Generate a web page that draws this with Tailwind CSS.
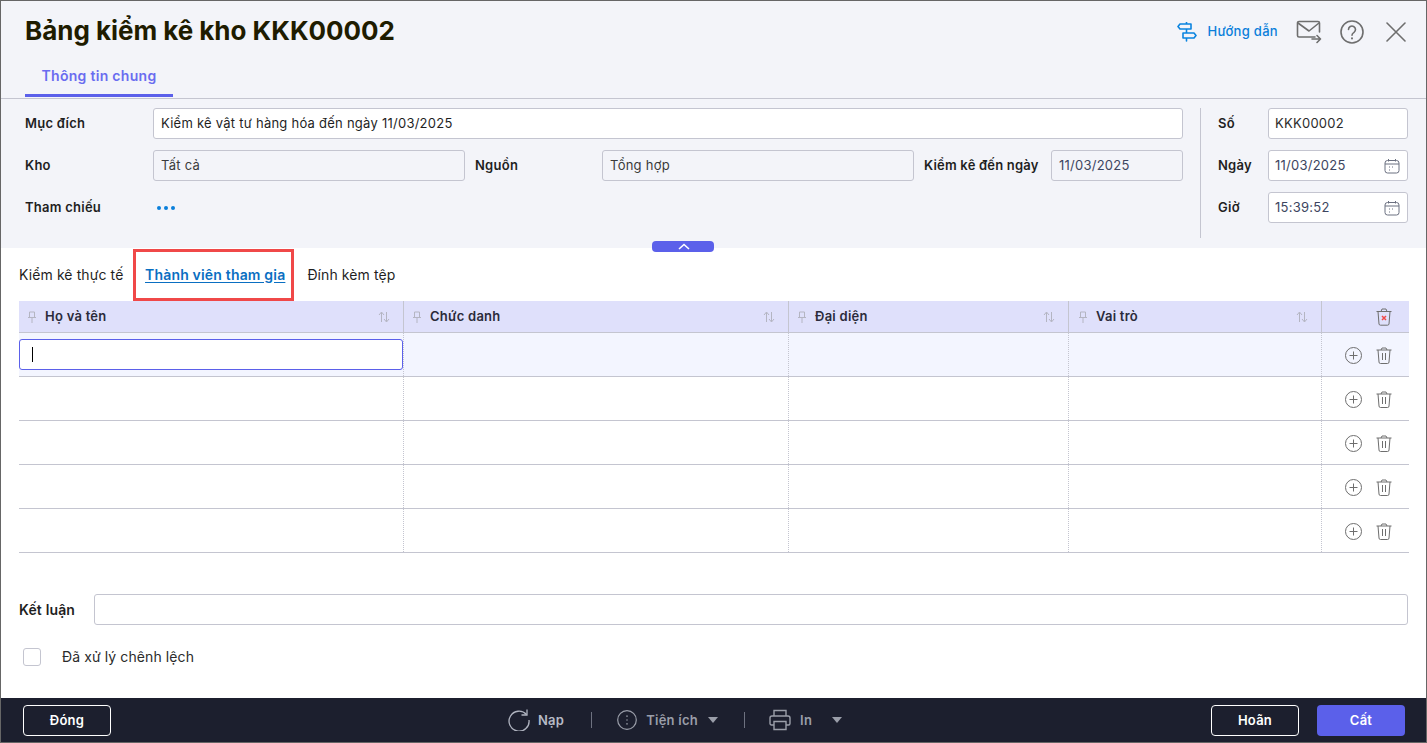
<!doctype html>
<html lang="vi"><head><meta charset="utf-8">
<script src="https://cdn.jsdelivr.net/npm/@tailwindcss/browser@4"></script>
</head>
<body class="m-0 bg-white">
<div class="w-[1427px] h-[743px] overflow-hidden flex flex-col border border-[#666666] font-['Inter',sans-serif] text-[13px] tracking-[0.25px] text-[#1f1f1f]">
  <!-- header -->
  <header class="h-[98px] shrink-0 bg-[#f3f4f9] border-b border-[#c4c5d0] flex justify-between relative">
    <div class="pl-[24px]">
      <h1 class="text-[26px] leading-[32px] font-bold tracking-[-0.03px] text-[#1f1c00] pt-[14px]">Bảng kiểm kê kho KKK00002</h1>
      <div class="mt-[12px] w-[148px] h-[38px] border-b-[3px] border-[#5b60ea] text-center text-[14px] leading-[33px] font-semibold tracking-[0.3px] text-[#6a6cf0]">Thông tin chung</div>
    </div>
    <div class="flex items-center h-[20px] mt-[21px] pr-[20px]">
      <svg class="w-[20px] h-[20px]" viewBox="0 0 20 20" fill="none" stroke="#0a84e0" stroke-width="1.6" stroke-linejoin="round" stroke-linecap="round"><path d="M3 2h11v5H3L1 4.500zM6 11h11l2 2.500L17 16H6zM9.500 0v2M9.500 7v4M9.500 16v3"/></svg>
      <span class="ml-[11px] text-[13px] font-medium tracking-[0.3px] text-[#0a7fdb]">Hướng dẫn</span>
      <svg class="ml-[18px] w-[26px] h-[24px]" viewBox="0 0 26 24" fill="none" stroke="#6e6e6e" stroke-width="1.6" stroke-linecap="round" stroke-linejoin="round"><path d="M19 17H3a1.500 1.500 0 0 1-1.500-1.500V3A1.500 1.500 0 0 1 3 1.500h19A1.500 1.500 0 0 1 23.500 3v9"/><path d="M2 3l11 8 10-8M16 19h8.500M21 15.500l3.500 3.500L21 22.500"/></svg>
      <svg class="ml-[18px] w-[24px] h-[24px]" viewBox="0 0 24 24" fill="none" stroke="#6e6e6e" stroke-width="1.6" stroke-linecap="round"><circle cx="12" cy="12" r="11"/><path d="M8.500 9.500a3.500 3.500 0 1 1 5.500 2.900c-1.300.8-2 1.400-2 2.900"/><path d="M12 18.200v.3" stroke-width="2"/></svg>
      <svg class="ml-[22px] w-[20px] h-[20px]" viewBox="0 0 20 20" fill="none" stroke="#6e6e6e" stroke-width="1.600" stroke-linecap="round"><path d="M1 1l18 18M19 1L1 19"/></svg>
    </div>
  </header>

  <!-- form -->
  <section class="relative h-[149px] shrink-0 bg-[#f3f4f9] pt-[9px] pl-[24px] pr-[18px] flex">
    <div class="w-[1158px] grid grid-cols-[128px_312px_10px_127px_312px_10px_127px_132px] grid-rows-[31px_31px_31px] gap-y-[11px] items-center">
      <label class="font-semibold">Mục đích</label>
      <div class="col-span-7 h-[31px] bg-white border border-[#c4c5d0] rounded-[3px] px-[7px] leading-[28px]">Kiểm kê vật tư hàng hóa đến ngày 11/03/2025</div>
      <label class="font-semibold">Kho</label>
      <div class="h-[31px] border border-[#c4c5d0] rounded-[3px] px-[7px] leading-[28px] text-[#3b3b3b]">Tất cả</div>
      <span></span>
      <label class="font-semibold">Nguồn</label>
      <div class="h-[31px] border border-[#c4c5d0] rounded-[3px] px-[7px] leading-[28px] text-[#3b3b3b]">Tổng hợp</div>
      <span></span>
      <label class="font-semibold tracking-[0.2px]">Kiểm kê đến ngày</label>
      <div class="h-[31px] border border-[#c4c5d0] rounded-[3px] px-[7px] leading-[28px] text-[#3d4560]">11/03/2025</div>
      <label class="font-semibold">Tham chiếu</label>
      <div class="col-span-7 flex gap-[3px] pl-[4px]">
        <i class="w-[4px] h-[4px] rounded-full bg-[#0a7fdb]"></i><i class="w-[4px] h-[4px] rounded-full bg-[#0a7fdb]"></i><i class="w-[4px] h-[4px] rounded-full bg-[#0a7fdb]"></i>
      </div>
    </div>
    <div class="ml-[17px] w-[1px] h-[130px] bg-[#c4c5d0]"></div>
    <div class="ml-[17px] w-[190px] grid grid-cols-[50px_140px] grid-rows-[31px_31px_31px] gap-y-[11px] items-center">
      <label class="font-semibold">Số</label>
      <div class="h-[31px] bg-white border border-[#c4c5d0] rounded-[3px] px-[6px] leading-[28px] text-[#2b2b2b]">KKK00002</div>
      <label class="font-semibold">Ngày</label>
      <div class="h-[31px] bg-white border border-[#c4c5d0] rounded-[3px] px-[6px] flex items-center justify-between text-[#3d4560]">11/03/2025
        <svg class="w-[16px] h-[16px] mr-[1px]" viewBox="0 0 16 16" fill="none" stroke="#6b7080" stroke-width="1"><rect x="1" y="2.500" width="14" height="12.500" rx="2.500"/><path d="M1 6h14M4.500 1v2.500M11.500 1v2.500M5 9h1M8 9h1M5 12h1" /></svg>
      </div>
      <label class="font-semibold">Giờ</label>
      <div class="h-[31px] bg-white border border-[#c4c5d0] rounded-[3px] px-[6px] flex items-center justify-between text-[#3d4560]">15:39:52
        <svg class="w-[16px] h-[16px] mr-[1px]" viewBox="0 0 16 16" fill="none" stroke="#6b7080" stroke-width="1"><rect x="1" y="2.500" width="14" height="12.500" rx="2.500"/><path d="M1 6h14M4.500 1v2.500M11.500 1v2.500M5 9h1M8 9h1M5 12h1" /></svg>
      </div>
    </div>
    <div class="absolute left-[651px] top-[142px] w-[62px] h-[11px] rounded-[4px] bg-[#5b60ea] pl-[1px] flex items-center justify-center z-10">
      <svg class="w-[12px] h-[7px]" viewBox="0 0 12 7" fill="none" stroke="#ffffff" stroke-width="1.600"><path d="M1 6l5-4.500L11 6"/></svg>
    </div>
  </section>

  <!-- body -->
  <main class="flex-1 min-h-0 px-[18px] bg-white">
    <nav class="h-[53px] flex items-center relative text-[14px] tracking-[0.1px]">
      <span class="w-[126px] pb-[1px]">Kiểm kê thực tế</span>
      <span class="font-semibold text-[#0a6fc2] underline underline-offset-2 tracking-[0.18px] pb-[1px]">Thành viên tham gia</span>
      <span class="ml-[22px] pb-[1px]">Đính kèm tệp</span>
      <div class="absolute left-[114px] top-[1px] w-[161px] h-[52px] border-[3px] border-[#f04848]"></div>
    </nav>
    <div class="w-[1390px]">
      <div class="grid grid-cols-[385px_385px_280px_253px_87px] h-[32px] bg-[#dfe0fb] border-b border-[#c4c5d0] font-semibold text-[#2b2b3a]">
        <div class="flex items-center pl-[7px] pr-[13px] border-r border-[#c4c5d0]">
          <svg class="w-[12px] h-[12px]" viewBox="0 0 12 12" fill="none" stroke="#b4b5c2"><path d="M3.500 1h5v5.500h-5zM2 6.500h8M6 6.500V12"/></svg>
          <span class="ml-[7px] flex-1">Họ và tên</span>
          <svg class="w-[12px] h-[12px]" viewBox="0 0 12 12" fill="none" stroke="#b4b5c2"><path d="M3.500 11V1.500M1 4l2.500-3L6 4M8.500 1v9.500M6 8l2.500 3L11 8"/></svg>
        </div>
        <div class="flex items-center pl-[7px] pr-[13px] border-r border-[#c4c5d0]">
          <svg class="w-[12px] h-[12px]" viewBox="0 0 12 12" fill="none" stroke="#b4b5c2"><path d="M3.500 1h5v5.500h-5zM2 6.500h8M6 6.500V12"/></svg>
          <span class="ml-[7px] flex-1">Chức danh</span>
          <svg class="w-[12px] h-[12px]" viewBox="0 0 12 12" fill="none" stroke="#b4b5c2"><path d="M3.500 11V1.500M1 4l2.500-3L6 4M8.500 1v9.500M6 8l2.500 3L11 8"/></svg>
        </div>
        <div class="flex items-center pl-[7px] pr-[13px] border-r border-[#c4c5d0]">
          <svg class="w-[12px] h-[12px]" viewBox="0 0 12 12" fill="none" stroke="#b4b5c2"><path d="M3.500 1h5v5.500h-5zM2 6.500h8M6 6.500V12"/></svg>
          <span class="ml-[7px] flex-1">Đại diện</span>
          <svg class="w-[12px] h-[12px]" viewBox="0 0 12 12" fill="none" stroke="#b4b5c2"><path d="M3.500 11V1.500M1 4l2.500-3L6 4M8.500 1v9.500M6 8l2.500 3L11 8"/></svg>
        </div>
        <div class="flex items-center pl-[8px] pr-[13px] border-r border-[#c4c5d0]">
          <svg class="w-[12px] h-[12px]" viewBox="0 0 12 12" fill="none" stroke="#b4b5c2"><path d="M3.500 1h5v5.500h-5zM2 6.500h8M6 6.500V12"/></svg>
          <span class="ml-[7px] flex-1">Vai trò</span>
          <svg class="w-[12px] h-[12px]" viewBox="0 0 12 12" fill="none" stroke="#b4b5c2"><path d="M3.500 11V1.500M1 4l2.500-3L6 4M8.500 1v9.500M6 8l2.500 3L11 8"/></svg>
        </div>
        <div class="flex items-center justify-end pr-[17px]">
          <svg class="w-[16px] h-[18px]" viewBox="0 0 16 18" fill="none" stroke="#6e6e6e"><path d="M.5 3.500h15M5 3.500L6 1h4l1 2.500M2 3.500l1 12.500a1.500 1.500 0 0 0 1.500 1.200h7A1.500 1.500 0 0 0 13 16l1-12.500"/><path d="M6 8l4 4M10 8l-4 4" stroke="#f04848" stroke-width="1.500"/></svg>
        </div>
      </div>

      <div class="grid grid-cols-[385px_385px_280px_253px_87px] h-[44px] bg-[#f3f5ff] border-b border-[#c4c5d0]">
        <div class="relative border-r border-dotted border-[#c4c5d0]">
          <div class="absolute left-0 top-[6px] w-[384px] h-[31px] bg-white border border-[#5b60ea] rounded-[3px] pl-[12px] flex items-center"><i class="w-[1px] h-[15px] bg-black"></i></div>
        </div>
        <div class="border-r border-dotted border-[#c4c5d0]"></div>
        <div class="border-r border-dotted border-[#c4c5d0]"></div>
        <div class="border-r border-dotted border-[#c4c5d0]"></div>
        <div class="flex items-center justify-end gap-[14px] pr-[17px] pt-[1px]">
          <svg class="w-[17px] h-[17px]" viewBox="0 0 17 17" fill="none" stroke="#6e6e6e"><circle cx="8.500" cy="8.500" r="8"/><path d="M8.500 4.500v8M4.500 8.500h8"/></svg>
          <svg class="w-[16px] h-[17px]" viewBox="0 0 16 17" fill="none" stroke="#6e6e6e"><path d="M.5 3h15M5 3l1-2h4l1 2M2 3l1 12a1.500 1.500 0 0 0 1.500 1.500h7A1.500 1.500 0 0 0 13 15l1-12M6.500 6v7M9.500 6v7"/></svg>
        </div>
      </div>
      <div class="grid grid-cols-[385px_385px_280px_253px_87px] h-[44px] border-b border-[#c4c5d0]">
        <div class="border-r border-dotted border-[#c4c5d0]"></div>
        <div class="border-r border-dotted border-[#c4c5d0]"></div>
        <div class="border-r border-dotted border-[#c4c5d0]"></div>
        <div class="border-r border-dotted border-[#c4c5d0]"></div>
        <div class="flex items-center justify-end gap-[14px] pr-[17px] pt-[1px]">
          <svg class="w-[17px] h-[17px]" viewBox="0 0 17 17" fill="none" stroke="#6e6e6e"><circle cx="8.500" cy="8.500" r="8"/><path d="M8.500 4.500v8M4.500 8.500h8"/></svg>
          <svg class="w-[16px] h-[17px]" viewBox="0 0 16 17" fill="none" stroke="#6e6e6e"><path d="M.5 3h15M5 3l1-2h4l1 2M2 3l1 12a1.500 1.500 0 0 0 1.500 1.500h7A1.500 1.500 0 0 0 13 15l1-12M6.500 6v7M9.500 6v7"/></svg>
        </div>
      </div>
      <div class="grid grid-cols-[385px_385px_280px_253px_87px] h-[44px] border-b border-[#c4c5d0]">
        <div class="border-r border-dotted border-[#c4c5d0]"></div>
        <div class="border-r border-dotted border-[#c4c5d0]"></div>
        <div class="border-r border-dotted border-[#c4c5d0]"></div>
        <div class="border-r border-dotted border-[#c4c5d0]"></div>
        <div class="flex items-center justify-end gap-[14px] pr-[17px] pt-[1px]">
          <svg class="w-[17px] h-[17px]" viewBox="0 0 17 17" fill="none" stroke="#6e6e6e"><circle cx="8.500" cy="8.500" r="8"/><path d="M8.500 4.500v8M4.500 8.500h8"/></svg>
          <svg class="w-[16px] h-[17px]" viewBox="0 0 16 17" fill="none" stroke="#6e6e6e"><path d="M.5 3h15M5 3l1-2h4l1 2M2 3l1 12a1.500 1.500 0 0 0 1.500 1.500h7A1.500 1.500 0 0 0 13 15l1-12M6.500 6v7M9.500 6v7"/></svg>
        </div>
      </div>
      <div class="grid grid-cols-[385px_385px_280px_253px_87px] h-[44px] border-b border-[#c4c5d0]">
        <div class="border-r border-dotted border-[#c4c5d0]"></div>
        <div class="border-r border-dotted border-[#c4c5d0]"></div>
        <div class="border-r border-dotted border-[#c4c5d0]"></div>
        <div class="border-r border-dotted border-[#c4c5d0]"></div>
        <div class="flex items-center justify-end gap-[14px] pr-[17px] pt-[1px]">
          <svg class="w-[17px] h-[17px]" viewBox="0 0 17 17" fill="none" stroke="#6e6e6e"><circle cx="8.500" cy="8.500" r="8"/><path d="M8.500 4.500v8M4.500 8.500h8"/></svg>
          <svg class="w-[16px] h-[17px]" viewBox="0 0 16 17" fill="none" stroke="#6e6e6e"><path d="M.5 3h15M5 3l1-2h4l1 2M2 3l1 12a1.500 1.500 0 0 0 1.500 1.500h7A1.500 1.500 0 0 0 13 15l1-12M6.500 6v7M9.500 6v7"/></svg>
        </div>
      </div>
      <div class="grid grid-cols-[385px_385px_280px_253px_87px] h-[44px] border-b border-[#c4c5d0]">
        <div class="border-r border-dotted border-[#c4c5d0]"></div>
        <div class="border-r border-dotted border-[#c4c5d0]"></div>
        <div class="border-r border-dotted border-[#c4c5d0]"></div>
        <div class="border-r border-dotted border-[#c4c5d0]"></div>
        <div class="flex items-center justify-end gap-[14px] pr-[17px] pt-[1px]">
          <svg class="w-[17px] h-[17px]" viewBox="0 0 17 17" fill="none" stroke="#6e6e6e"><circle cx="8.500" cy="8.500" r="8"/><path d="M8.500 4.500v8M4.500 8.500h8"/></svg>
          <svg class="w-[16px] h-[17px]" viewBox="0 0 16 17" fill="none" stroke="#6e6e6e"><path d="M.5 3h15M5 3l1-2h4l1 2M2 3l1 12a1.500 1.500 0 0 0 1.500 1.500h7A1.500 1.500 0 0 0 13 15l1-12M6.500 6v7M9.500 6v7"/></svg>
        </div>
      </div>
    </div>
    <div class="mt-[41px] flex items-center">
      <label class="w-[75px] text-[14px] font-semibold tracking-[0.15px]">Kết luận</label>
      <div class="w-[1315px] h-[31px] bg-white border border-[#c4c5d0] rounded-[3px]"></div>
    </div>
    <div class="mt-[23px] ml-[4px] flex items-center">
      <span class="w-[18px] h-[18px] bg-white border border-[#c4c5d0] rounded-[3px]"></span>
      <span class="ml-[21px] text-[14px] leading-[18px] tracking-[0.1px] text-[#2b2b2b]">Đã xử lý chênh lệch</span>
    </div>
  </main>

  <!-- footer -->
  <footer class="h-[44px] shrink-0 bg-[#1c1f2e] pl-[22px] pr-[21px] flex items-center font-semibold">
    <button class="w-[88px] h-[31px] border border-white rounded-[4px] text-white pt-[1px]">Đóng</button>
    <div class="w-[397px]"></div>
    <svg class="w-[22px] h-[22px]" viewBox="0 0 22 22" fill="none" stroke="#b0b4c0" stroke-width="1.300"><path d="M18.500 5.500A10 10 0 1 0 21 11"/><path d="M19 .5v5.500h-5.500"/></svg>
    <span class="ml-[8px] pt-[1px] text-[#b6bac6]">Nạp</span>
    <i class="ml-[27px] w-[1px] h-[16px] bg-[#6e7280]"></i>
    <svg class="ml-[25px] w-[20px] h-[20px]" viewBox="0 0 20 20" fill="none" stroke="#9a9ea9" stroke-width="1.200"><circle cx="10" cy="10" r="9.300"/><path d="M10 5.500v1.200M10 9.400v1.200M10 13.300v1.200" stroke-width="1.600"/></svg>
    <span class="ml-[9px] pt-[1px] text-[#9a9ea9]">Tiện ích</span>
    <svg class="ml-[10px] w-[10px] h-[6px]" viewBox="0 0 10 6" fill="#9a9ea9"><path d="M0 0h10L5 6z"/></svg>
    <i class="ml-[26px] w-[1px] h-[16px] bg-[#6e7280]"></i>
    <svg class="ml-[24px] w-[22px] h-[22px]" viewBox="0 0 22 22" fill="none" stroke="#9a9ea9" stroke-width="1.400"><path d="M5 7V1.500h12V7M5 16H2.500A1.500 1.500 0 0 1 1 14.500V9a2 2 0 0 1 2-2h16a2 2 0 0 1 2 2v5.500a1.500 1.500 0 0 1-1.500 1.500H17"/><path d="M5 12.500h12v8H5z"/></svg>
    <span class="ml-[9px] pt-[1px] text-[#9a9ea9]">In</span>
    <svg class="ml-[20px] w-[10px] h-[6px]" viewBox="0 0 10 6" fill="#9a9ea9"><path d="M0 0h10L5 6z"/></svg>
    <div class="flex-1"></div>
    <button class="w-[88px] h-[31px] border border-white rounded-[4px] text-white pt-[1px]">Hoãn</button>
    <button class="ml-[18px] w-[88px] h-[31px] rounded-[4px] bg-[#5b60ea] text-white pt-[1px]">Cất</button>
  </footer>
</div>
</body></html>
